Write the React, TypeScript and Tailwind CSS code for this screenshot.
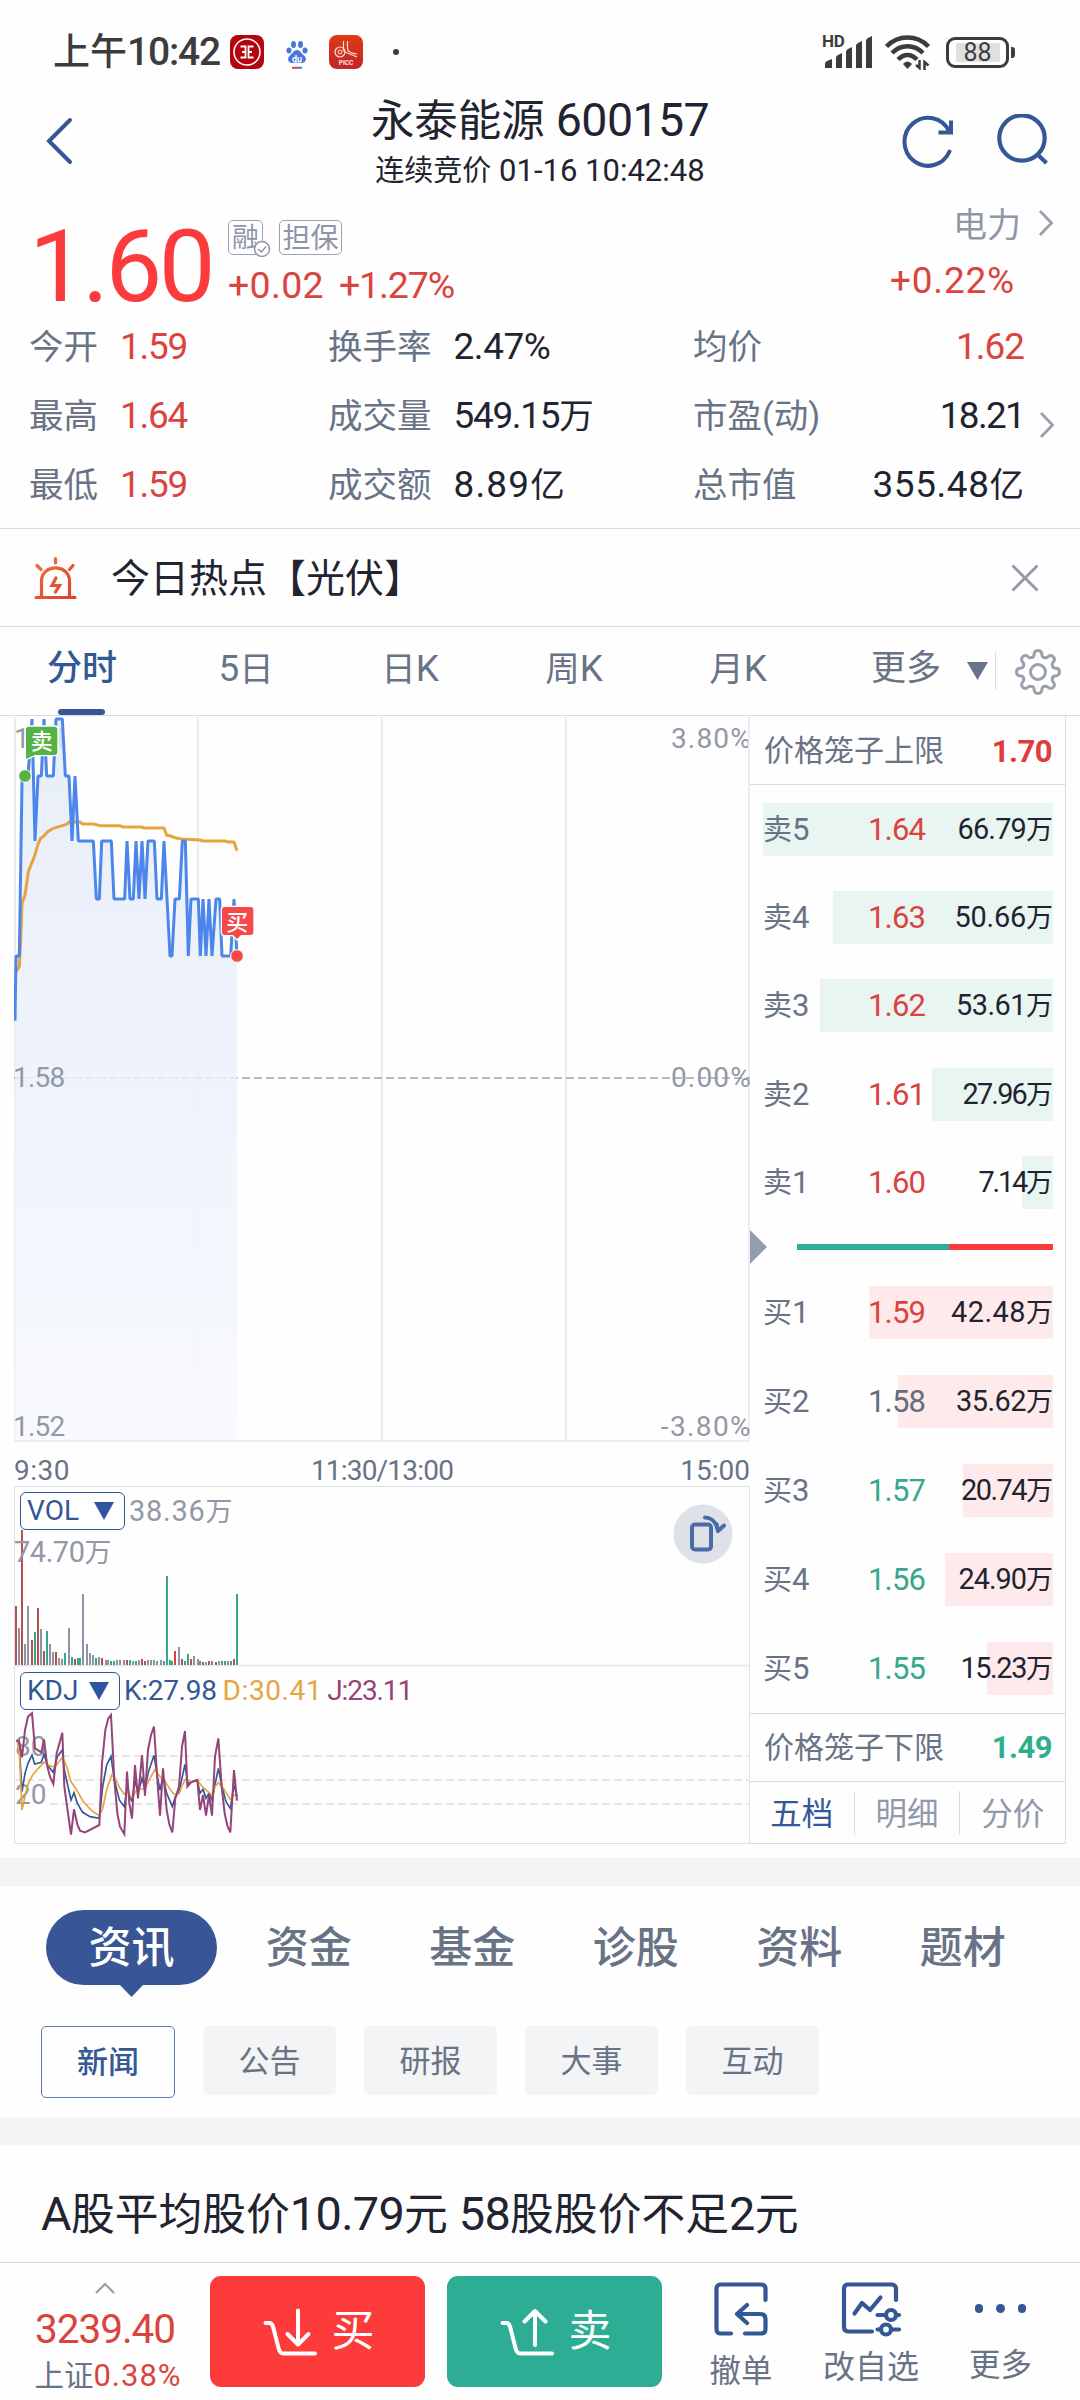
import React from "react";

type Level = { label: string; price: string; volume: number; tone: "up" | "down" | "flat"; track: string };

const sells: Level[] = [
    { label: "卖5", price: "1.64", volume: 66.79, tone: "up", track: "tracking-[-0.8px]" },
    { label: "卖4", price: "1.63", volume: 50.66, tone: "up", track: "tracking-[-0.2px]" },
    { label: "卖3", price: "1.62", volume: 53.61, tone: "up", track: "tracking-[-0.5px]" },
    { label: "卖2", price: "1.61", volume: 27.96, tone: "up", track: "tracking-[-1.8px]" },
    { label: "卖1", price: "1.60", volume: 7.14, tone: "up", track: "tracking-[-2.2px]" },
];

const buys: Level[] = [
    { label: "买1", price: "1.59", volume: 42.48, tone: "up", track: "tracking-[0.5px]" },
    { label: "买2", price: "1.58", volume: 35.62, tone: "flat", track: "tracking-[-0.5px]" },
    { label: "买3", price: "1.57", volume: 20.74, tone: "down", track: "tracking-[-1.5px]" },
    { label: "买4", price: "1.56", volume: 24.9, tone: "down", track: "tracking-[-1px]" },
    { label: "买5", price: "1.55", volume: 15.23, tone: "down", track: "tracking-[-1.4px]" },
];

const MAX_VOLUME = 66.79;

const toneClass = {
    up: "text-[#d9443f]",
    down: "text-[#38a68b]",
    flat: "text-[#666c7c]",
};

const pricePoints =
    "45,962 48,768 58,768 66,245 66,228 84,228 96,57 105,423 114,228 124,228 132,57 140,228 160,228 168,57 187,57 196,228 207,228 216,423 225,228 235,423 280,423 289,597 298,597 305,423 334,423 342,597 374,597 381,423 390,597 400,597 408,423 417,597 426,423 435,597 444,423 463,423 471,597 484,597 492,423 510,768 516,768 525,597 538,597 547,423 556,423 565,768 573,597 595,597 601,768 609,597 618,768 627,597 636,768 648,597 659,597 666,768 692,768 702,597 711,768";

const averagePoints =
    "48,815 58,800 62,720 66,610 75,585 85,515 103,470 115,430 122,415 132,408 142,396 160,385 180,379 198,374 208,366 240,366 248,372 280,372 300,377 358,377 370,381 425,381 434,384 492,384 500,406 512,408 525,413 545,417 600,420 607,423 675,423 685,426 702,426 711,452";

const jPoints =
    "48,962 57,962 66,1012 75,930 84,890 96,880 105,985 124,997 132,958 142,1040 150,1070 160,1092 170,1000 187,938 193,1100 213,1244 222,1168 232,1213 240,1232 255,1237 298,1215 306,1030 316,930 325,895 333,885 343,1080 352,1180 360,1220 373,1242 381,1055 388,1150 396,1196 405,1035 414,1135 426,1005 435,1127 444,990 453,945 462,920 472,1080 480,1187 489,1045 500,1170 508,1213 517,1237 526,1135 537,1100 546,980 555,933 562,1100 573,1087 592,1080 600,1170 609,1125 618,1187 627,1125 636,1187 645,1010 655,955 665,1100 674,1180 682,1217 691,1237 702,1050 711,1142";

const kPoints =
    "57,965 66,1115 75,1060 84,1030 96,1005 104,1032 124,1027 132,1003 142,1035 160,1057 172,1010 187,990 193,1050 213,1140 222,1118 232,1150 248,1177 270,1190 298,1195 308,1100 320,1035 333,1009 343,1080 358,1140 373,1160 381,1105 396,1145 405,1080 414,1120 426,1075 435,1110 444,1060 462,1006 472,1070 480,1110 489,1070 500,1120 517,1160 526,1130 537,1115 555,1033 563,1090 592,1080 600,1120 609,1108 618,1135 627,1120 636,1140 655,1045 666,1100 678,1145 691,1165 702,1095 711,1130";

const dPoints =
    "52,965 58,1000 66,1170 76,1125 85,1090 98,1065 115,1045 132,1027 150,1037 165,1042 187,1012 200,1040 213,1085 230,1110 250,1145 275,1172 298,1187 308,1165 320,1110 335,1065 345,1075 360,1105 373,1123 381,1115 396,1133 410,1110 435,1105 450,1075 465,1048 480,1070 492,1078 505,1100 520,1122 537,1122 547,1095 557,1077 575,1085 592,1080 605,1098 620,1112 636,1125 645,1100 655,1088 670,1105 691,1138 702,1125 711,1128";

const R = "#b5524f";
const G = "#38a68b";
const N = "#8e93a3";

// x, top, colour
const volumeBars: [number, number, string][] = [
    [48, 558, R], [57, 624, N], [66, 330, R], [75, 672, N], [84, 558, N], [96, 660, R],
    [105, 636, G], [114, 564, R], [123, 627, N], [132, 693, R], [141, 633, G], [150, 672, N],
    [159, 696, N], [168, 696, R], [177, 714, N], [186, 717, N], [195, 699, G], [207, 624, N],
    [216, 711, G], [225, 717, R], [234, 714, G], [240, 714, G], [249, 522, N], [261, 672, N],
    [270, 699, N], [279, 705, N], [288, 714, G], [297, 711, N], [306, 714, R], [318, 720, N],
    [324, 720, N], [333, 723, G], [342, 723, G], [351, 720, N], [360, 720, N], [372, 720, N],
    [381, 720, R], [390, 720, G], [399, 723, N], [408, 723, G], [417, 720, N], [426, 717, R],
    [435, 723, R], [444, 720, N], [453, 720, N], [462, 720, N], [471, 723, N], [483, 720, N],
    [492, 723, G], [501, 468, G], [510, 720, G], [516, 723, G], [525, 693, "#d9443f"], [537, 681, N],
    [546, 717, R], [555, 723, G], [564, 702, G], [573, 717, R], [582, 708, N], [594, 717, N],
    [600, 723, G], [609, 726, R], [618, 726, N], [627, 723, R], [636, 723, G], [648, 726, R],
    [657, 723, N], [666, 723, G], [675, 723, G], [684, 723, N], [693, 723, G], [702, 717, R],
    [711, 522, G],
];

/* Latin runs are set slightly larger than the Chinese characters beside them */
const Mix = ({ children }: { children: string }) => (
    <>
        {children.split(/([\u0020-\u00ff]+)/).filter(Boolean).map((part, i) =>
            part.charCodeAt(0) < 256 ? (
                <span key={i} className="text-[1.07em] whitespace-pre">{part}</span>
            ) : (
                <span key={i} className="tracking-normal">{part}</span>
            )
        )}
    </>
);

const ChevronRight = ({ className }: { className: string }) => (
    <svg className={className} width="16" height="28" viewBox="0 0 16 28" fill="none" stroke="#9a9fab" strokeWidth="2.8">
        <path d="M2 2L13.500 14L2 26" />
    </svg>
);

const StatusBar = () => (
    <div className="flex h-[90px] items-center pt-[14px] pl-[53px] pr-[65px] text-[#3c3c3c]">
        <span className="text-[37px] font-medium leading-none">上午</span>
        <span className="text-[39px] font-medium leading-none tracking-[-1.2px]">10:42</span>
        <svg className="ml-[10px]" width="34" height="34" viewBox="0 0 34 34" fill="none">
            <rect width="34" height="34" rx="8" fill="#b5040f" />
            <circle cx="17" cy="17" r="13" stroke="#fff" strokeWidth="1.500" />
            <path d="M10.500 11.500H15.500V22.500H10.500M12 17H15.500M23.500 11.500H18.500V22.500H23.500M18.500 17H22" stroke="#fff" strokeWidth="1.800" />
        </svg>
        <svg className="ml-[16px]" width="34" height="34" viewBox="0 0 34 34" fill="#4876dc">
            <ellipse cx="13.500" cy="9.500" rx="2.500" ry="3.500" />
            <ellipse cx="20.500" cy="9.500" rx="2.500" ry="3.500" />
            <ellipse cx="9" cy="15.500" rx="2.500" ry="3" />
            <ellipse cx="25" cy="15.500" rx="2.500" ry="3" />
            <path d="M17 15C20 15 21 18 24 20.500C28 24 25 28.500 21.500 28C18 27.400 16 27.400 12.500 28C9 28.500 6 24 10 20.500C13 18 14 15 17 15Z" />
            <path d="M12 32.800H17" stroke="#d9443f" strokeWidth="2" />
            <path d="M17 32.800H22" stroke="#4876dc" strokeWidth="2" />
            <text x="17" y="26.500" textAnchor="middle" fontSize="9" fontWeight="700" fill="#fff">du</text>
        </svg>
        <svg className="ml-[15px]" width="34" height="34" viewBox="0 0 34 34" fill="none">
            <defs>
                <linearGradient id="picc" x1="0" y1="0" x2="0" y2="1">
                    <stop offset="0" stopColor="#e03a12" />
                    <stop offset="1" stopColor="#c2252b" />
                </linearGradient>
            </defs>
            <rect width="34" height="34" rx="8" fill="url(#picc)" />
            <circle cx="11" cy="17" r="5" stroke="#ffe3da" strokeWidth="1.200" />
            <circle cx="11" cy="17" r="2" stroke="#ffe3da" strokeWidth="1" />
            <path d="M14.500 6V15C15 18 20 18 28 22M18.500 6V13.500C18.500 17 23 18.500 28 19" stroke="#ffe3da" strokeWidth="1.200" />
            <text x="17" y="30" textAnchor="middle" fontSize="6.500" fontWeight="700" fill="#ffe3da">PICC</text>
        </svg>
        <div className="ml-[30px] size-[6px] rounded-full bg-[#3c3c3c]" />
        <div className="relative ml-auto">
            <span className="absolute top-[-1px] left-[-1px] text-[17px] leading-[17px] font-bold tracking-[-0.3px]">HD</span>
            <svg width="52" height="36" viewBox="0 0 52 36" fill="#3c3c3c">
                <path d="M2 34V30Q2 28 4 27L9 25V34ZM13 34V24Q13 22 15 21L19 19V34ZM23 34V18Q23 16 25 15L29 13V34ZM33 34V12Q33 10 35 9L39 7V34ZM43 34V7Q43 5 45 4L49 2V34Z" />
            </svg>
        </div>
        <svg className="ml-[9px]" width="48" height="36" viewBox="0 0 48 36" fill="none" stroke="#3c3c3c" strokeWidth="4.500">
            <path d="M2.500 12.500C14 0.500 33 0.500 44.500 12.500" />
            <path d="M8 19C17 10 30 10 39 19" />
            <path d="M14 25.500C20 19.500 27 19.500 33 25.500" />
            <path d="M19 30C22 26.500 25 26.500 28 30L23.500 35Z" fill="#3c3c3c" stroke="none" />
            <path d="M35.500 26V34L32 31M40.500 36V28L44.500 31.500" strokeWidth="2.500" />
        </svg>
        <div className="ml-[14px] flex h-[31px] w-[63px] items-center justify-center rounded-[9px] border-[3px] border-[#3c3c3c]">
            <div className="flex h-[19px] w-[44px] items-center justify-center rounded-[2px] bg-[#e0e0e0] text-[25px] leading-none">88</div>
        </div>
        <div className="ml-[2px] h-[11px] w-[4px] rounded-r-[3px] bg-[#3c3c3c]" />
    </div>
);

const NavBar = () => (
    <div className="flex h-[100px] justify-between text-[#1f2430]">
        <div className="w-[200px] pt-[26px] pl-[45px]">
            <svg width="29" height="50" viewBox="0 0 29 50" fill="none" stroke="#345795" strokeWidth="4" strokeLinecap="round">
                <path d="M25 4L4 25L25 46" />
            </svg>
        </div>
        <div className="flex flex-col items-center pt-[4px]">
            <div className="h-[52px] text-[43.500px] leading-[52px] tracking-[-0.6px]"><Mix>永泰能源 600157</Mix></div>
            <div className="mt-[7px] h-[36px] text-[29px] leading-[36px]"><Mix>连续竞价 01-16 10:42:48</Mix></div>
        </div>
        <div className="flex w-[200px] justify-end gap-[43px] pt-[24px] pr-[31px]">
            <svg width="52" height="54" viewBox="0 0 52 54" fill="none" stroke="#345795" strokeWidth="4">
                <path d="M47.500 37.500A23.500 24 0 1 1 47 17" strokeLinecap="round" />
                <path d="M49 6.500V18.500H36.500" />
            </svg>
            <svg width="52" height="54" viewBox="0 0 52 54" fill="none" stroke="#345795" strokeWidth="4.200">
                <circle cx="25" cy="24" r="22.700" />
                <path d="M40 40L49.500 49" />
            </svg>
        </div>
    </div>
);

type StatProps = { label: string; value: string; tone?: string; track?: string; end?: boolean };

const Stat = ({ label, value, tone, track, end }: StatProps) => (
    <div className={end ? "flex h-[69px] items-center justify-between" : "flex h-[69px] items-center gap-[22px]"}>
        <span className="text-[34.500px] leading-none text-[#697386]">{label}</span>
        <span className={`text-[34.5px] leading-none ${tone ?? "text-[#1f2430]"} ${track ?? ""}`}><Mix>{value}</Mix></span>
    </div>
);

const Quote = () => (
    <div className="h-[339px] border-b border-[#dcdcdf]">
        <div className="flex h-[123px]">
            <div className="w-[228px] pt-[27px] pl-[29px] text-[101px] leading-[100px] tracking-[-3.500px] text-[#fc3c3c]">1.60</div>
            <div className="pt-[30px]">
                <div className="flex gap-[16px] text-[#8f94a8]">
                    <div className="relative flex h-[35px] w-[35px] items-center justify-center rounded-[5px] border-[1.500px] border-[#9da1b3] pt-[2px] text-[27px] leading-none">
                        融
                        <svg className="absolute top-[19px] left-[24px]" width="18" height="18" viewBox="0 0 18 18" fill="#fff" stroke="#8f94a8" strokeWidth="1.500">
                            <circle cx="9" cy="9" r="7.500" />
                            <path d="M5 9L8.500 12L13 6.500" />
                        </svg>
                    </div>
                    <div className="flex h-[35px] w-[63px] items-center justify-center rounded-[5px] border-[1.500px] border-[#9da1b3] pt-[2px] text-[28px] leading-none">担保</div>
                </div>
                <div className="mt-[11px] flex gap-[15px] text-[37.5px] leading-[38px] text-[#d9443f]">
                    <span className="tracking-[0.3px]">+0.02</span>
                    <span className="tracking-[-1.1px]">+1.27%</span>
                </div>
            </div>
            <div className="ml-auto flex flex-col items-end pr-[26px]">
                <div className="mt-[17px] flex h-[36px] items-center gap-[17px]">
                    <span className="text-[34px] leading-none text-[#8f97a6]">电力</span>
                    <ChevronRight className="mb-[4px]" />
                </div>
                <div className="mt-[18px] pr-[39px] text-[37px] leading-[40px] tracking-[0.8px] text-[#d9443f]">+0.22%</div>
            </div>
        </div>
        <div className="flex">
            <div className="w-[299px] pl-[29px]">
                <Stat label="今开" value="1.59" tone="text-[#d9443f]" track="tracking-[-1.2px]" />
                <Stat label="最高" value="1.64" tone="text-[#d9443f]" track="tracking-[-1.2px]" />
                <Stat label="最低" value="1.59" tone="text-[#d9443f]" track="tracking-[-1.2px]" />
            </div>
            <div className="w-[364px] pl-[29px]">
                <Stat label="换手率" value="2.47%" track="tracking-[-0.4px]" />
                <Stat label="成交量" value="549.15万" track="tracking-[-1.3px]" />
                <Stat label="成交额" value="8.89亿" track="tracking-[1.2px]" />
            </div>
            <div className="w-[361px] pl-[30px]">
                <Stat end label="均价" value="1.62" tone="text-[#d9443f]" track="tracking-[-1px]" />
                <Stat end label="市盈(动)" value="18.21" track="tracking-[-1.7px]" />
                <Stat end label="总市值" value="355.48亿" track="tracking-[0.6px]" />
            </div>
            <ChevronRight className="mt-[98px] ml-[15px]" />
        </div>
    </div>
);

const HotTopic = () => (
    <div className="flex h-[98px] items-center border-b border-[#dcdcdf] pl-[34px] pr-[41px]">
        <svg width="43" height="44" viewBox="0 0 43 44" fill="none" stroke="url(#alarm)" strokeWidth="3.200" strokeLinecap="round">
            <defs>
                <linearGradient id="alarm" gradientUnits="userSpaceOnUse" x1="8" y1="4" x2="38" y2="42">
                    <stop offset="0" stopColor="#e8703a" />
                    <stop offset="1" stopColor="#e0402a" />
                </linearGradient>
            </defs>
            <path d="M2 41.500H41M7.500 41V25C7.500 7.500 35.500 7.500 35.500 25V41" />
            <path d="M21.500 2.500V7M3 9.500L7 13.500M39 9.500L35.500 13.500" />
            <path d="M22 22L18 29.500H25.500L21.500 36" />
        </svg>
        <span className="mt-[3px] ml-[34px] text-[39px] leading-none text-[#1f2430]">今日热点【光伏】</span>
        <svg className="ml-auto" width="28" height="28" viewBox="0 0 28 28" fill="none" stroke="#9498a6" strokeWidth="2.800">
            <path d="M1.500 1.500L26.500 26.500M26.500 1.500L1.500 26.500" />
        </svg>
    </div>
);

const periods = ["5日", "日K", "周K", "月K"];

const PeriodTabs = () => (
    <div className="flex h-[89px] border-b border-[#dcdcdf] text-[34.500px] leading-[83px] text-[#697386]">
        <div className="relative w-[164px] text-center text-[35px] font-medium text-[#345795]">
            分时
            <div className="absolute bottom-0 left-[58px] h-[6px] w-[47px] rounded-full bg-[#345795]" />
        </div>
        {periods.map((p) => (
            <div key={p} className="w-[164px] text-center"><Mix>{p}</Mix></div>
        ))}
        <div className="ml-[51px] w-[70px] text-[35px]">更多</div>
        <svg className="mt-[35px] ml-[26px]" width="21" height="18" viewBox="0 0 21 18" fill="#697388">
            <path d="M0 0H21L10.500 18Z" />
        </svg>
        <div className="mt-[25px] ml-[7px] h-[38px] w-px bg-[#dcdcdf]" />
        <svg className="mt-[21px] ml-[18px]" width="48" height="48" viewBox="0 0 48 48" fill="none" stroke="#9a9fae" strokeWidth="2.900" strokeLinejoin="round">
            <circle cx="24" cy="24" r="7.500" />
            <path d="M20 7.500Q20 2.500 24 2.500Q28 2.500 28 7.500Q29 10.500 33 9.500Q36.500 6 39.300 8.700Q42 11.500 38.500 15Q37.500 19 40.500 20Q45.500 20 45.500 24Q45.500 28 40.500 28Q37.500 29 38.500 33Q42 36.500 39.300 39.300Q36.500 42 33 38.500Q29 37.500 28 40.500Q28 45.500 24 45.500Q20 45.500 20 40.500Q19 37.500 15 38.500Q11.500 42 8.700 39.300Q6 36.500 9.500 33Q10.500 29 7.500 28Q2.500 28 2.500 24Q2.500 20 7.500 20Q10.500 19 9.500 15Q6 11.500 8.700 8.700Q11.500 6 15 9.500Q19 10.500 20 7.500Z" />
        </svg>
    </div>
);

const PriceChart = () => (
    <div className="relative h-[726px] text-[28px] leading-none text-[#9298a6]">
        <span className="absolute top-[9px] left-0 tracking-[-1px]">1.64</span>
        <span className="absolute top-[9px] right-[-2px] tracking-[1.2px]">3.80%</span>
        <svg className="absolute inset-0" width="736" height="726" viewBox="42 48 2208 2178" fill="none">
            <defs>
                <linearGradient id="area" x1="0" y1="0" x2="0" y2="1">
                    <stop offset="0" stopColor="#e4ebf8" stopOpacity="0.85" />
                    <stop offset="0.500" stopColor="#ecf1fb" stopOpacity="0.85" />
                    <stop offset="1" stopColor="#f7f9fe" stopOpacity="0.850" />
                </linearGradient>
            </defs>
            <path d="M45 51V2223M594 51V2223M1146 51V2223M1698 51V2223M2247 51V2223M42 2223H2250" stroke="#ececef" strokeWidth="6" />
            <path d="M42 1134H2250" stroke="#9aa0ad" strokeWidth="5" strokeDasharray="24 12" />
            <polygon points={`45,2220 ${pricePoints} 711,2220`} fill="url(#area)" />
            <polyline points={averagePoints} stroke="#e5a53e" strokeWidth="9" strokeLinejoin="round" />
            <polyline points={pricePoints} stroke="#4c86ea" strokeWidth="9" strokeLinejoin="bevel" />
            <circle cx="75" cy="228" r="19" fill="#54b344" stroke="#fff" strokeWidth="3" />
            <path d="M76 88Q76 78 86 78H164Q174 78 174 88V157Q174 167 164 167H105L76 180Z" fill="#54b344" stroke="#fff" strokeWidth="4" />
            <circle cx="711" cy="768" r="19" fill="#f74848" stroke="#fff" strokeWidth="3" />
            <path d="M664 629Q664 619 674 619H752Q762 619 762 629V697Q762 707 752 707H724L711 720L698 707H674Q664 707 664 697Z" fill="#f74848" stroke="#fff" strokeWidth="4" />
            <text x="125" y="148" textAnchor="middle" fontSize="66" fontWeight="500" fill="#fff">卖</text>
            <text x="712" y="690" textAnchor="middle" fontSize="66" fontWeight="500" fill="#fff">买</text>
        </svg>
        <span className="absolute top-[348px] left-[-1px] tracking-[-0.8px]">1.58</span>
        <span className="absolute top-[348px] right-[-2px] tracking-[1.2px]">0.00%</span>
        <span className="absolute bottom-[1px] left-[-1px] tracking-[-0.8px]">1.52</span>
        <span className="absolute bottom-[1px] right-[-2px] tracking-[1.400px]">-3.80%</span>
    </div>
);

const IndicatorSelect = ({ name, width }: { name: string; width: string }) => (
    <div className={`flex h-[38px] items-center justify-between rounded-[6px] border border-[#345795] bg-white pr-[10px] pl-[6px] text-[28px] leading-none text-[#345795] ${width}`}>
        {name}
        <svg width="20" height="18" viewBox="0 0 20 18" fill="#3055a0">
            <path d="M0 0H20L10 18Z" />
        </svg>
    </div>
);

const VolumeChart = () => (
    <div className="relative h-[181px] border-t border-r border-l border-[#dfdfe3]">
        <svg className="absolute -top-px -left-px" width="736" height="181" viewBox="42 198 2208 543" fill="none">
            <path d="M42 737H2250" stroke="#e6e7ec" strokeWidth="5" />
            {volumeBars.map(([x, top, color]) => (
                <path key={x} d={`M${x} 735V${top}`} stroke={color} strokeWidth="6" />
            ))}
        </svg>
        <div className="relative mt-[5px] flex items-center pl-[5px] leading-none text-[#9298a6]">
            <IndicatorSelect name="VOL" width="w-[105px]" />
            <span className="ml-[4px] text-[27px] tracking-[0.8px]"><Mix>38.36万</Mix></span>
        </div>
        <div className="relative mt-[8px] ml-[-1px] text-[27px] leading-none tracking-[-0.4px] text-[#9298a6]"><Mix>74.70万</Mix></div>
        <svg className="absolute top-[17px] right-[16px]" width="60" height="60" viewBox="0 0 60 60" fill="none" stroke="#4a6ba8" strokeWidth="4">
            <circle cx="30" cy="30" r="29.500" fill="#dfe1e8" stroke="none" />
            <rect x="19" y="20.500" width="19" height="25" rx="3" />
            <path d="M32 13.500C40 13.500 43 19 45 26" strokeLinecap="round" />
            <path d="M43.500 20L45 27L51 21.500" strokeLinecap="round" strokeLinejoin="round" />
        </svg>
    </div>
);

const KdjChart = () => (
    <div className="relative h-[177px] border-r border-b border-l border-[#dfdfe3]">
        <svg className="absolute top-0 -left-px" width="736" height="177" viewBox="42 741 2208 531" fill="none" strokeWidth="5">
            <path d="M150 1008H2250M42 1080H2250M150 1152H2250" stroke="#e6e7ea" strokeWidth="6" strokeDasharray="24 12" />
            <text x="45" y="1008" fontSize="84" fill="#9298a6">80</text>
            <text x="45" y="1152" fontSize="84" fill="#9298a6">20</text>
            <polyline points={kPoints} stroke="#345795" />
            <polyline points={dPoints} stroke="#e5a53e" />
            <polyline points={jPoints} stroke="#95447a" strokeWidth="6" />
        </svg>
        <div className="relative flex items-center pt-[5px] pl-[5px] text-[28px] leading-none">
            <IndicatorSelect name="KDJ" width="w-[100px]" />
            <span className="ml-[4px] tracking-[-0.3px] text-[#345795]">K:27.98</span>
            <span className="ml-[6px] tracking-[0.6px] text-[#e5a53e]">D:30.41</span>
            <span className="ml-[5px] tracking-[-1.1px] text-[#95447a]">J:23.11</span>
        </div>
    </div>
);

const BookRow = ({ level, side }: { level: Level; side: "sell" | "buy" }) => (
    <div className={side === "sell" ? "relative flex h-[88.4px] items-center" : "relative flex h-[89px] items-center"}>
        <div
            className={side === "sell" ? "absolute right-[12px] h-[53px] bg-[#e8f5f1]" : "absolute right-[12px] h-[53px] bg-[#feeaea]"}
            style={{ width: (level.volume / MAX_VOLUME) * 290 }}
        />
        <span className="relative w-[106px] pl-[13px] text-[29px] leading-none text-[#697386]"><Mix>{level.label}</Mix></span>
        <span className={`relative pl-[12px] text-[31px] leading-none tracking-[-0.8px] ${toneClass[level.tone]}`}>{level.price}</span>
        <span className={`relative mr-[12px] ml-auto text-[27px] leading-none text-[#1f2430] ${level.track}`}><Mix>{level.volume.toFixed(2) + "万"}</Mix></span>
    </div>
);

const OrderBook = () => (
    <div className="w-[316px] border-r border-b border-[#dcdcdf]">
        <div className="flex h-[69px] items-center justify-between border-b border-[#dcdcdf] pt-[2px] pr-[13px] pl-[14px]">
            <span className="text-[30px] leading-none text-[#697386]">价格笼子上限</span>
            <span className="text-[31px] leading-none font-bold tracking-[-0.5px] text-[#e03c3c]">1.70</span>
        </div>
        {sells.map((s) => <BookRow key={s.label} level={s} side="sell" />)}
        <div className="flex h-[41px] items-center">
            <svg width="17" height="34" viewBox="0 0 17 34" fill="#949dad">
                <path d="M0 0L17 17L0 34Z" />
            </svg>
            <div className="ml-[30px] h-[6px] w-[152px] bg-[#2eae93]" />
            <div className="h-[6px] w-[104px] bg-[#fa3c3c]" />
        </div>
        {buys.map((b) => <BookRow key={b.label} level={b} side="buy" />)}
        <div className="flex h-[69px] items-center justify-between border-y border-[#dcdcdf] pt-px pr-[13px] pl-[14px]">
            <span className="text-[30px] leading-none text-[#697386]">价格笼子下限</span>
            <span className="text-[31px] leading-none font-bold tracking-[-0.5px] text-[#2fae8f]">1.49</span>
        </div>
        <div className="flex h-[62px] items-center text-[31.5px] leading-none text-[#9298aa]">
            <div className="w-[104px] pt-[3px] text-center text-[#345795]">五档</div>
            <div className="h-[44px] w-px bg-[#dcdcdf]" />
            <div className="w-[105px] pt-[3px] text-center">明细</div>
            <div className="h-[44px] w-px bg-[#dcdcdf]" />
            <div className="w-[105px] pt-[3px] text-center">分价</div>
        </div>
    </div>
);

const sections = ["资金", "基金", "诊股", "资料", "题材"];
const feeds = ["公告", "研报", "大事", "互动"];

const InfoTabs = () => (
    <div className="h-[231px]">
        <div className="flex pt-[24px] pl-[46px] text-[43px] leading-[77px] font-medium text-[#697386]">
            <div className="relative mr-[10px] h-[75px] w-[171px] rounded-full bg-[#385596] text-center text-white">
                资讯
                <svg className="absolute top-[74px] left-[73px]" width="25" height="13" viewBox="0 0 25 13" fill="#385596">
                    <path d="M0 0H25L12.500 13Z" />
                </svg>
            </div>
            {sections.map((s) => <div key={s} className="h-[75px] w-[163.500px] text-center">{s}</div>)}
        </div>
        <div className="mt-[41px] flex gap-[28px] pl-[41px] text-[31px] leading-[71px] text-[#697386]">
            <div className="h-[72px] w-[134px] rounded-[5px] border border-[#5a7ba8] text-center font-medium text-[#345795]">新闻</div>
            {feeds.map((f) => <div key={f} className="h-[69px] w-[133px] rounded-[5px] bg-[#f3f4f6] text-center">{f}</div>)}
        </div>
    </div>
);

const TradeBar = () => (
    <div className="flex h-[138px] border-t border-[#dcdcdf] text-[#697386]">
        <div className="flex w-[210px] flex-col items-center pt-[19px]">
            <svg width="20" height="12" viewBox="0 0 20 12" fill="none" stroke="#9a9fae" strokeWidth="2.200">
                <path d="M1 11L10 2L19 11" />
            </svg>
            <div className="mt-[13px] text-[40.5px] leading-[44px] tracking-[-1px] text-[#d9443f]">3239.40</div>
            <div className="mt-[7px] ml-[6px] flex items-center text-[29.500px] leading-[36px]">
                上证<span className="text-[31px] tracking-[1px] text-[#d9443f]">0.38%</span>
            </div>
        </div>
        <div className="mt-[13px] flex h-[111px] w-[215px] items-center justify-center gap-[15px] rounded-[11px] bg-[#fe3b3b] pl-[2px] text-[43px] leading-none text-white">
            <svg width="54" height="48" viewBox="0 0 54 48" fill="none" stroke="#fff" strokeWidth="4" strokeLinecap="round" strokeLinejoin="round">
                <path d="M2.500 15H6Q9 15 10 18.500L15.500 40Q17 45.500 20 45.500H52M35 2.500V36M24.500 26L35 36.500L45.500 26" />
            </svg>
            买
        </div>
        <div className="mt-[13px] ml-[22px] flex h-[111px] w-[215px] items-center justify-center gap-[15px] rounded-[11px] bg-[#2dae94] pl-[2px] text-[43px] leading-none text-white">
            <svg width="54" height="48" viewBox="0 0 54 48" fill="none" stroke="#fff" strokeWidth="4" strokeLinecap="round" strokeLinejoin="round">
                <path d="M2.500 15H6Q9 15 10 18.500L15.500 40Q17 45.500 20 45.500H52M35 37V3.500M24.500 13.500L35 3L45.500 13.500" />
            </svg>
            卖
        </div>
        <div className="flex w-[156px] flex-col items-center pt-[18px] pl-[2px] text-[31.5px] leading-[36px]">
            <svg width="56" height="56" viewBox="0 0 56 56" fill="none" stroke="#345795" strokeWidth="4.200" strokeLinecap="round" strokeLinejoin="round">
                <path d="M18 52.500H8Q3.500 52.500 3.500 48V8Q3.500 3.500 8 3.500H47.500Q52.500 3.500 52.500 8V19" />
                <path d="M34 24L24 33L34 42M24 33H47Q52.500 33 52.500 38V48Q52.500 52.500 48 52.500H32" />
            </svg>
            <span className="mt-[17px]">撤单</span>
        </div>
        <div className="flex w-[106px] flex-col items-center pt-[18px] text-[32px] leading-[36px]">
            <svg width="62" height="56" viewBox="0 0 62 56" fill="none" stroke="#345795" strokeWidth="4.200" strokeLinecap="round" strokeLinejoin="round">
                <path d="M32 50.500H8Q4 50.500 4 46V8Q4 3.500 8 3.500H51Q56 3.500 56 8V19" />
                <path d="M14.500 32.500L22 22L30 29L40.500 16.500" />
                <path d="M37.500 34H46M56 34H59M37.500 48.500H41M51 48.500H59" />
                <circle cx="51" cy="34" r="5" />
                <circle cx="46" cy="48.500" r="5" />
            </svg>
            <span className="mt-[12px]">改自选</span>
        </div>
        <div className="flex w-[153px] flex-col items-center pt-[41px] text-[31.5px] leading-[36px]">
            <div className="flex gap-[13px]">
                <div className="size-[8.500px] rounded-full bg-[#345795]" />
                <div className="size-[8.500px] rounded-full bg-[#345795]" />
                <div className="size-[8.500px] rounded-full bg-[#345795]" />
            </div>
            <span className="mt-[35px]">更多</span>
        </div>
    </div>
);

const App: React.FC = () => {
    return (
        <div lang="zh-CN" className="flex h-[2400px] w-[1080px] flex-col overflow-hidden bg-[#fefefe] font-['Roboto','Noto_Sans_CJK_SC',sans-serif]">
            <StatusBar />
            <NavBar />
            <Quote />
            <HotTopic />
            <PeriodTabs />
            <div className="flex h-[1128px] pl-[14px]">
                <div className="w-[736px]">
                    <PriceChart />
                    <div className="grid h-[44px] grid-cols-3 items-center pt-[13px] text-[28px] leading-none text-[#697386]">
                        <span className="tracking-[0.5px]">9:30</span>
                        <span className="text-center tracking-[-0.8px]">11:30/13:00</span>
                        <span className="text-right">15:00</span>
                    </div>
                    <VolumeChart />
                    <KdjChart />
                </div>
                <OrderBook />
            </div>
            <div className="mt-[14px] h-[28px] bg-[#f2f4f6]" />
            <InfoTabs />
            <div className="h-[28px] bg-[#f2f4f6]" />
            <div className="h-[117px] pt-[33px] pl-[41px] text-[43.800px] leading-[72px] tracking-[-0.7px] text-[#1f2430]"><Mix>A股平均股价10.79元 58股股价不足2元</Mix></div>
            <TradeBar />
        </div>
    );
};

export default App;
